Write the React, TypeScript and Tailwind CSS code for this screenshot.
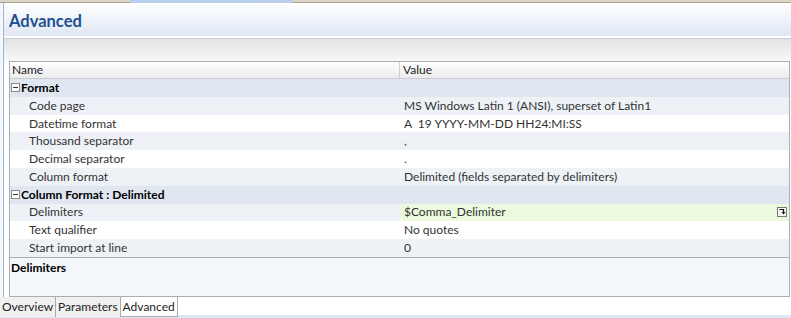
import { ReactNode } from "react";

const font = { fontFamily: "'Lato', 'Open Sans', sans-serif" };

type Row =
  | { kind: "group"; label: string }
  | { kind: "item"; name: string; value: string; alt: boolean; edit?: boolean };

const rows: Row[] = [
  { kind: "group", label: "Format" },
  { kind: "item", name: "Code page", value: "MS Windows Latin 1 (ANSI), superset of Latin1", alt: true },
  { kind: "item", name: "Datetime format", value: "A  19 YYYY-MM-DD HH24:MI:SS", alt: false },
  { kind: "item", name: "Thousand separator", value: ",", alt: true },
  { kind: "item", name: "Decimal separator", value: ".", alt: false },
  { kind: "item", name: "Column format", value: "Delimited (fields separated by delimiters)", alt: true },
  { kind: "group", label: "Column Format : Delimited" },
  { kind: "item", name: "Delimiters", value: "$Comma_Delimiter", alt: true, edit: true },
  { kind: "item", name: "Text qualifier", value: "No quotes", alt: false },
  { kind: "item", name: "Start import at line", value: "0", alt: true },
];

const MinusBox = () => (
  <svg width="9" height="9" viewBox="0 0 9 9" className="shrink-0">
    <rect x="0.5" y="0.5" width="8" height="8" fill="#fff" stroke="#8a8a8a" />
    <path d="M2 4.5h5" stroke="#333" />
  </svg>
);

const PickIcon = () => (
  <svg width="10" height="10" viewBox="0 0 10 10">
    <rect x="0.5" y="0.5" width="9" height="9" fill="#f4f4f4" stroke="#777" />
    <path d="M2.5 2.5h4v3" stroke="#111" fill="none" strokeWidth="1.2" />
    <path d="M4.5 5h4L6.5 7.5z" fill="#111" />
  </svg>
);

function Tab({ children, active }: { children: ReactNode; active?: boolean }) {
  return (
    <div
      className={
        "h-[20px] px-[2px] flex items-center text-[12px] text-[#222] border-r border-[#a9a9a9] " +
        (active ? "bg-white border-b border-b-[#a9a9a9]" : "bg-[#f0f0f0]")
      }
    >
      {children}
    </div>
  );
}

export default function App() {
  return (
    <div className="w-[791px] h-[318px] bg-white overflow-hidden flex flex-col" style={font}>
      {/* upper tab remnants */}
      <div className="h-[3px] flex shrink-0">
        <div className="w-[130px] bg-[#ddd6c8] border-b border-[#a8a095]" />
        <div className="w-[163px] bg-[#b8cfee]" />
        <div className="flex-1 bg-[#ddd6c8] border-b border-[#a8a095]" />
      </div>

      <div className="flex-1 flex min-h-0">
        <div className="w-[4px] bg-[#f3f6fa] border-r border-[#9fb5d4] shrink-0" />
        <div className="flex-1 flex flex-col min-w-0">
          {/* header */}
          <div className="h-[35px] bg-gradient-to-b from-white to-[#dfe7f3] flex items-center pl-[5px] border-b-2 border-b-white shrink-0">
            <span className="text-[16.5px] font-bold text-[#1d4f8e] mt-[4px]">Advanced</span>
          </div>
          <div className="h-[1px] bg-[#c4ccd8] shrink-0" />
          {/* toolbar */}
          <div className="h-[22px] bg-gradient-to-b from-[#e3e3e3] to-[#f8f8f8] shrink-0" />

          <div className="flex-1 flex flex-col pl-[5px] pr-[1px] min-h-0">
            <div className="border-t border-l border-r border-[#a9aeb6] flex flex-col">
              {/* column header */}
              <div className="h-[17px] flex bg-gradient-to-b from-white to-[#ececec] border-b border-[#c8cdd4] text-[12px] text-[#222]">
                <div className="w-[390px] pl-[2px] border-r border-[#d2d2d2] flex items-center">Name</div>
                <div className="flex-1 pl-[3px] flex items-center">Value</div>
              </div>
              {rows.map((r, i) =>
                r.kind === "group" ? (
                  <div key={i} className="h-[17.8px] flex items-center bg-[#dfe6f0] gap-[1px] pl-[1px]">
                    <MinusBox />
                    <span className="text-[12px] font-bold text-black">{r.label}</span>
                  </div>
                ) : (
                  <div
                    key={i}
                    className={
                      "h-[17.8px] flex text-[12px] text-[#333] " + (r.alt ? "bg-[#eef2f7]" : "bg-white")
                    }
                  >
                    <div className="w-[391px] pl-[19px] flex items-center">{r.name}</div>
                    <div
                      className={
                        "flex-1 pl-[3px] pr-[2px] flex items-center justify-between " +
                        (r.edit ? "bg-[#ebfadd]" : "")
                      }
                    >
                      <span className="whitespace-pre">{r.value}</span>
                      {r.edit && <PickIcon />}
                    </div>
                  </div>
                )
              )}
            </div>
            {/* description */}
            <div className="flex-1 border border-[#a9aeb6] bg-[#f3f6fb] px-[1px] pt-[1px] leading-[14px]">
              <span className="text-[12px] font-bold text-black">Delimiters</span>
            </div>
          </div>
        </div>
      </div>

      {/* bottom tabs */}
      <div className="h-[21px] flex shrink-0 border-b-[3px] border-b-[#dce7f5]">
        <Tab>Overview</Tab>
        <Tab>Parameters</Tab>
        <Tab active>Advanced</Tab>
      </div>
    </div>
  );
}
